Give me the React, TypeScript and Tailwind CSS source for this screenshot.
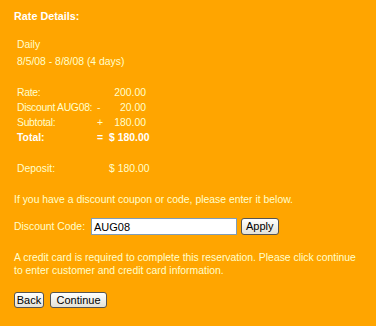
const rows = [
  { label: 'Rate:', sign: '', amount: '200.00' },
  { label: 'Discount AUG08:', sign: '-', amount: '20.00' },
  { label: 'Subtotal:', sign: '+', amount: '180.00' },
];

const btn =
  'rounded-[3px] border border-[#555] bg-gradient-to-b from-white to-[#e4e2d8] text-black text-[11px] leading-none font-["Liberation_Sans",Arial,sans-serif]';

const App = () => {
  return (
    <div className="w-[376px] h-[326px] overflow-hidden bg-[#ffa500] text-[#ffffcc] text-[10.4px] leading-[15px] font-['Liberation_Sans',Arial,sans-serif] pl-[14px] pr-[10px] pt-[9px]">
      <h2 className="text-[10.8px] font-bold text-white">Rate Details:</h2>

      <div className="mt-[13px] pl-[3px]">
        <div>Daily</div>
        <div className="mt-[2px]">8/5/08 - 8/8/08 (4 days)</div>
      </div>

      {/* Rate breakdown */}
      <div className="mt-[16px] pl-[3px] grid grid-cols-[80px_12px_37px] whitespace-nowrap">
        {rows.map((r) => (
          <div key={r.label} className="contents">
            <span className="tracking-[-0.3px]">{r.label}</span>
            <span>{r.sign}</span>
            <span className="text-right">{r.amount}</span>
          </div>
        ))}
        <span className="font-bold text-white">Total:</span>
        <span className="font-bold text-white">=</span>
        <span className="text-right font-bold text-white">$ 180.00</span>
        <span className="mt-[16px]">Deposit:</span>
        <span className="mt-[16px]"></span>
        <span className="mt-[16px] text-right">$ 180.00</span>
      </div>

      <p className="mt-[16px]">If you have a discount coupon or code, please enter it below.</p>

      <div className="mt-[11px] flex items-center">
        <span className="w-[77px] shrink-0 whitespace-nowrap">Discount Code:</span>
        <input
          defaultValue="AUG08"
          className="w-[146px] h-[17px] bg-white border border-[#7f9db9] px-[2px] text-[11px] text-black outline-none"
        />
        <button className={`ml-[4px] h-[17px] px-[4px] ${btn}`}>Apply</button>
      </div>

      <p className="mt-[17px] leading-[12.5px]">
        A credit card is required to complete this reservation. Please click continue to enter customer and credit card information.
      </p>

      <div className="mt-[15px] flex gap-[6px]">
        <button className={`h-[16px] w-[30px] ${btn}`}>Back</button>
        <button className={`h-[16px] w-[57px] ${btn}`}>Continue</button>
      </div>
    </div>
  );
};

export default App;
